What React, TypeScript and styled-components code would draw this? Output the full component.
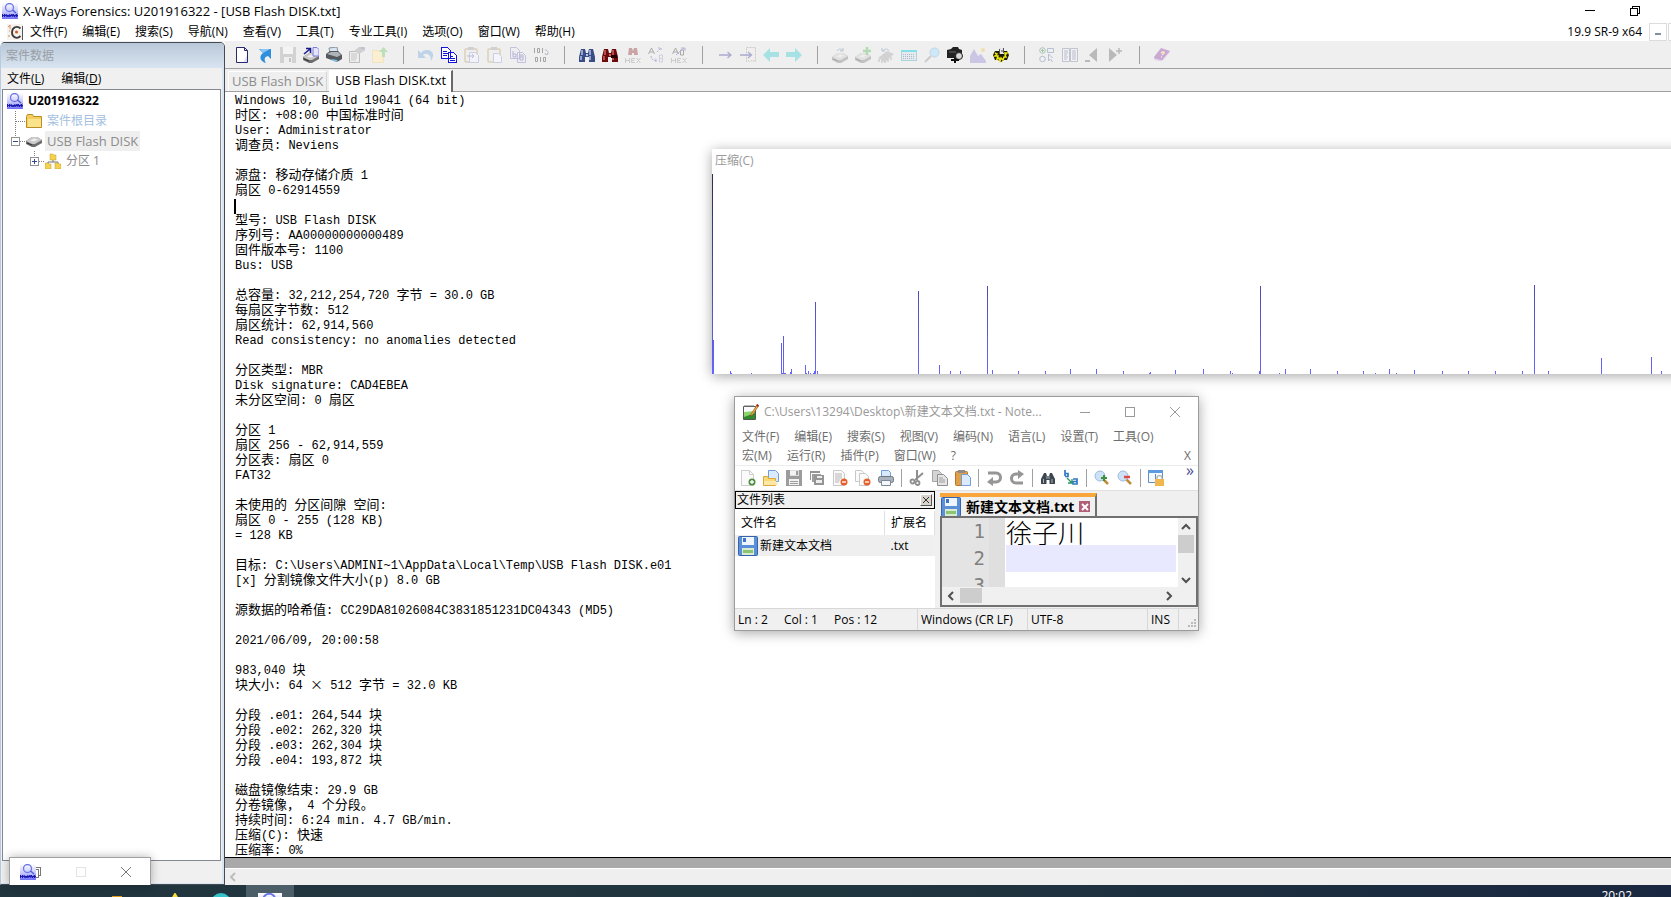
import React, { ReactNode } from "react";
import styled, { createGlobalStyle, css } from "styled-components";

const UI = `"Open Sans", "Noto Sans", "Noto Sans CJK SC", sans-serif`;
const MONO = `"Liberation Mono", "Noto Sans CJK SC", monospace`;

const GlobalStyle = createGlobalStyle`
  html, body, #root { height: 100%; }
  body { margin: 0; overflow: hidden; background: #fff; }
  *, *::before, *::after { box-sizing: border-box; }
  button { font: inherit; color: inherit; background: none; border: 0; padding: 0; margin: 0; }
  h1, h2, ul, p { margin: 0; padding: 0; font: inherit; list-style: none; }
  svg { display: block; flex: none; }
`;

/* ---------- icons ---------- */

const Svg = ({ w = 16, h = 16, crisp, children }: { w?: number; h?: number; crisp?: boolean; children: ReactNode }) => (
  <svg width={w} height={h} viewBox={`0 0 ${w} ${h}`} fill="none" shapeRendering={crisp ? "crispEdges" : undefined} aria-hidden="true">
    {children}
  </svg>
);

const Logo = ({ size = 16 }: { size?: number }) => (
  <svg width={size} height={size} viewBox="0 0 16 16" fill="none" aria-hidden="true">
    <defs>
      <linearGradient id="logoBg" x1="0" y1="0" x2="0" y2="1">
        <stop offset="0" stopColor="#fff" />
        <stop offset=".6" stopColor="#c3c3fb" />
        <stop offset="1" stopColor="#6f6ffa" />
      </linearGradient>
    </defs>
    <rect width="16" height="16" fill="url(#logoBg)" />
    <circle cx="7.5" cy="4.5" r="4" stroke="#6a78e8" strokeWidth="1.3" />
    <path d="M10.500 7l3.500 3" stroke="#5560d8" strokeWidth="1.6" />
    <path d="M0 11l3 3M3 11l-3 3M4 11l1 3 1-2 1 2 1-3M8.500 14l1.500-3 1 3M11 11l1.500 1.500V14M15.500 11l-2 1 2 1-2 1M0 12.500h16" stroke="#1a1ab0" strokeWidth="1" />
  </svg>
);

const AppDoc = () => (
  <Svg>
    <rect width="16" height="16" fill="#f6f2ee" />
    <path d="M13.500 4.500C10 1 5 3.500 5 8.500s5 7 8.500 3.500" stroke="#3a3a3a" strokeWidth="1.800" />
    <circle cx="9.500" cy="8" r="1.500" fill="#d8541c" />
    <path d="M1 3l2-2v4M2 7h1M1 12h2" stroke="#d88a5c" />
    <path d="M15.500 2v14" stroke="#555" />
  </Svg>
);

const drive = (dy = 0, dim = false) => (
  <g opacity={dim ? 0.35 : 1}>
    <path d={`M0 ${9 + dy}l6-4h5l5 3v3l-7 4h-3l-6-3z`} fill="#6d6d6d" />
    <path d={`M0 ${9 + dy}l6-4h5l5 3-7 4h-3z`} fill="#c9c9c9" />
    <path d={`M4 ${8.5 + dy}l4-2 4 1-4 2z`} fill="#efefef" />
    <path d={`M1 ${11 + dy}l5 2`} stroke="#333" />
  </g>
);

const binoculars = (dark: string, light: string) => (
  <>
    <path d="M2 2h4l1 4h2l1-4h4l2 8v5h-6v-5H6v5H0v-5z" fill={dark} />
    <path d="M3 3v5M11 3v5M2 9v4M11 9v4" stroke={light} strokeWidth="1.500" />
    <path d="M7 7h2v2H7z" fill={light} />
  </>
);

const hexWord = (
  <path d="M.5 11v5M.5 13.500h4M4.500 11v5M10 11.500H6.500v4H10M6.500 13.500H9M11.500 11l4 5M15.500 11l-4 5" stroke="#cbcbcb" />
);

const Icons: Record<string, ReactNode> = {
  newDoc: <Svg><path d="M2.500.5h8l3 3v12h-11z" fill="#fff" stroke="#28286e" /><path d="M10.500.5v3h3" stroke="#28286e" /><path d="M10 15h3V8z" fill="#dcdcf4" /></Svg>,
  shortcut: <Svg><path d="M2 2h12v10l-3-3c-4 1-4 4-2 7-5-1-8-6-3-10z" fill="#2f8fdc" /><path d="M3 2h10L6 6z" fill="#8cc6f4" /></Svg>,
  saveDim: <Svg crisp><path d="M0 0h16v16H0z" fill="#d2d2d2" /><path d="M3 0h10v7H3z" fill="#f4f4f4" /><path d="M4 10h8v6H4z" fill="#efefef" /><path d="M9 11h2v4H9z" fill="#c4c4c4" /></Svg>,
  driveRead: <Svg>{drive(1)}<path d="M10 .5h4l2 2V9h-6z" fill="#e3e3ff" stroke="#7a7ad8" /><path d="M1 7l6-5M3 1.500h4.500V6" stroke="#1b1b90" strokeWidth="1.600" /></Svg>,
  printer: <Svg><path d="M3 1l8-1 1 6H4z" fill="#d8e6f4" stroke="#88939c" /><path d="M0 7l4-3h8l4 4v4l-5 3-11-4z" fill="#55585c" /><path d="M1 7l4-2h7l3 3-4 2z" fill="#aeb4ba" /><path d="M5 12l6 1 1 2-5-1z" fill="#7cc7ef" /></Svg>,
  props: <Svg><path d="M.5 4.500h10v11H.5z" fill="#eee" stroke="#bbb" /><path d="M2 7h6M2 9h6M2 11h6M2 13h5" stroke="#c4c4c4" /><path d="M5 4l5-4h5v4l-5 3z" fill="#cfcfcf" /><path d="M12 1h4v3" stroke="#aeb2d4" /></Svg>,
  folderUp: <Svg><path d="M.5 3.500h11v12H.5z" fill="#faefd2" stroke="#f3e3bc" /><path d="M10 10V5H7l4.500-5L16 5h-3v5z" fill="#bce0bc" /></Svg>,
  undo: <Svg><path d="M0 3v8h8L5 8c3-3 8-1 8 6 5-8 0-11-4-11-3 0-5 1-6 3z" fill="#bfd3e8" /></Svg>,
  copy: <Svg crisp><path d="M.5.5h6l3 3v8h-9zM7.500 5.500h5l3 3v7h-8z" fill="#fff" stroke="#1414dc" /><path d="M2 4h4M2 6h5M2 8h4M9 9h3M9 11h5M9 13h5" stroke="#1414dc" /></Svg>,
  paste1: <Svg><rect x="1" y="2" width="12" height="13" rx="1" stroke="#ddd0ba" strokeWidth="1.500" /><path d="M4 0h6v3H4z" fill="#d0d0d0" /><path d="M5.500 5.500h6l3 3v7h-9z" fill="#f2f2fb" stroke="#cdcde0" /><path d="M3 9h7M8 7l2 2-2 2" stroke="#bcbcd4" /></Svg>,
  paste2: <Svg><rect x="1" y="2" width="12" height="13" rx="1" stroke="#ddd0ba" strokeWidth="1.500" /><path d="M4 0h6v3H4z" fill="#d0d0d0" /><path d="M6.500 6.500h5l3 3v6h-8z" fill="#f4f4fb" stroke="#cdcde0" /></Svg>,
  copyHex: <Svg><path d="M.5.5h6l3 3v8h-9zM7.500 5.500h5l3 3v7h-8z" fill="#eee" stroke="#c2c2e0" /><path d="M3 4v6M3 7h3v3H3M10 8v5h3v-5h-3M10 10h3" stroke="#b4b4d8" /></Svg>,
  binary: <Svg><path d="M1.500 1v5M4.500 1.500h2v4h-2zM9.500 1v5M2.500 10.500h2v4h-2zM7.500 10v5M10.500 10.500h2v4h-2z" stroke="#a4a4a4" /><path d="M12 3c3 0 4 3 2 5M15 6l-2 2-1-2" stroke="#bcbccc" /></Svg>,
  find: <Svg>{binoculars("#3a4c86", "#b4c4ec")}</Svg>,
  findHex: <Svg>{binoculars("#6c0b0b", "#d26666")}<path d="M9 8h6v3H9z" fill="#200" /></Svg>,
  findDim: <Svg><g opacity=".35"><path d="M4 1h3l1 3 1-3h3l1 7H9V6H7v2H3z" fill="#8a1c1c" /></g>{hexWord}</Svg>,
  replaceAB: <Svg><path d="M.5 7l3-6 3 6M1.500 5h4" stroke="#aaa" /><path d="M11.500 8v7h3v-7h-3M11.500 11.500h3" stroke="#cfcfe4" /><path d="M3 9c0 3 2 5 6 4.500M7 11.500l2 2-2 2M9 5l4-4M10 1h3v3" stroke="#b2b2d4" strokeDasharray="2 1" /></Svg>,
  replaceHex: <Svg><path d="M1.500 7l3-6 3 6M2.500 5h4M9.500 3v5h3V3h-3" stroke="#aaa" /><path d="M5 8l8-7M10 1h4v3" stroke="#b2b2d4" />{hexWord}</Svg>,
  arrow: <Svg><path d="M2 8h12M10.500 5L14 8l-3.500 3" stroke="#ababd0" strokeWidth="1.300" /></Svg>,
  arrowPage: <Svg><path d="M6.500.5h9v14l-1.500-1-1.500 1-1.500-1-1.500 1-1.500-1-1.500 1z" stroke="#d4c9c2" strokeDasharray="2 1" /><path d="M0 8h11M8 5l3.500 3L8 11" stroke="#ababd0" strokeWidth="1.300" /></Svg>,
  back: <Svg><path d="M0 8l7-7v4h9v5H7v5z" fill="#a6e2e4" /></Svg>,
  forward: <Svg><path d="M16 8L9 1v4H0v5h9v5z" fill="#a6e2e4" /></Svg>,
  disk1: <Svg>{drive(1, true)}<path d="M5 4c2-3 5-2 6 0M11 1v3H8" stroke="#b4c6d6" /></Svg>,
  disk2: <Svg>{drive(1, true)}<path d="M12 0v8M8 4h8" stroke="#b4dab4" strokeWidth="2.500" /></Svg>,
  ram: <Svg><path d="M0 11l9-7 7 3-9 8z" fill="#d2d2d2" /><path d="M1 12v3M4 13v3M7 14v2M10 12v3M13 10v3" stroke="#bebebe" /><path d="M5 4c2-3 5-2 6 0M4 1v3h3" stroke="#b4c6d6" /></Svg>,
  keyboard: <Svg crisp><path d="M0 3h16v11H0z" fill="#a8d6da" /><path d="M0 3h16v2H0z" fill="#84dfe6" /><path d="M1 5h14v8H1z" fill="#e4eaee" /><path d="M2 7h12M2 9h12M2 11h12" stroke="#b0b6c8" strokeDasharray="1 1" /></Svg>,
  lens: <Svg><path d="M1 15l6-6" stroke="#cbcbcb" strokeWidth="2" /><circle cx="10.500" cy="5.500" r="4.500" fill="#cfe8f8" stroke="#bdd6e8" /></Svg>,
  camera: <Svg><path d="M0 3l4-1 2-2h5l1 2 3 1v8H0z" fill="#222" /><path d="M2 5h7" stroke="#666" /><circle cx="12" cy="9" r="3.500" fill="#d6d6d6" stroke="#222" /><path d="M4 13h8M8 11v5" stroke="#111" strokeWidth="2" /></Svg>,
  picture: <Svg><path d="M0 16V9l4-7 4 7 3-2 5 7v2z" fill="#cac6e4" /><circle cx="13" cy="3" r="2" fill="#f3dcae" /></Svg>,
  gear: <Svg><path d="M2 4l12 0 2 4-2 5-3 0-3 2-3-2-3 0-2-5z" fill="#1c1c00" /><path d="M2 6l2 1-2 2 3 0-1 3 2-1 1 3 1-3 2 2 1-3 2 0-1-2 2-2-3 0" stroke="#f0e614" strokeWidth="1.500" /><path d="M6 1h5v6H6z" fill="#e6e6e6" /><path d="M6.500 2v5M10.500 1v5M8 4h2" stroke="#555" /></Svg>,
  selectors: <Svg><circle cx="3.500" cy="3.500" r="2.800" stroke="#a9c4b4" /><circle cx="3.500" cy="12" r="2.800" stroke="#b4c0d4" /><path d="M8.500 1.500h6v4h-6zM9.500 7v7l2-2 2 3M9.500 7l4 4" stroke="#b4c0d4" /><path d="M3.500 2v3M2 3.500h3" stroke="#9cc49c" /></Svg>,
  book: <Svg><path d="M.5 1.500h7v13h-7zM8.500 1.500h7v13h-7z" fill="#f2f2f2" stroke="#c0c4d0" /><path d="M2 4h4M2 6h4M2 8h3M2 10h4M2 12h3M10 4h4M10 6h4M10 8h4M10 10h4M10 12h4" stroke="#b8c0cc" /></Svg>,
  prevMinus: <Svg><path d="M12 1v14L4 8z" fill="#b9b9b9" /><path d="M0 14h5" stroke="#b9b9b9" strokeWidth="2" /></Svg>,
  nextPlus: <Svg><path d="M1 1v14l8-7z" fill="#b9b9b9" /><path d="M8 4h6M11 1v6" stroke="#b9b9b9" strokeWidth="1.500" /></Svg>,
  help: <Svg><path d="M0 10l7-9 9 3-8 10-7-1z" fill="#c9a8d4" /><path d="M1 12l7 2 8-9" stroke="#eadff0" /><path d="M7 6c2-2 4-1 3 0L8 8M7 10h1" stroke="#f5ecc0" strokeWidth="1.300" /></Svg>,
};

const noteSave = (c: string) => (
  <Svg crisp><path d="M0 0h16v16H0z" fill={c} /><path d="M4 0h9v6H4z" fill="#ddd" /><path d="M4 1h8v4H4z" fill="#f4f4f4" /><path d="M10 1h2v4h-2z" fill={c} /><path d="M3 9h10v6H3z" fill="#f2f2f2" /><path d="M4 11h8M4 13h8" stroke={c} /></Svg>
);

const badge = (c: string, plus?: boolean) => (
  <>
    <circle cx="12" cy="12" r="3.500" fill={c} />
    <path d={plus ? "M10 12h4M12 10v4" : "M10 12h4"} stroke="#fff" strokeWidth="1.300" />
  </>
);

const NoteIcons: Record<string, ReactNode> = {
  newFile: <Svg><path d="M1.500.5h8l4 4v11h-12z" fill="#fafafa" stroke="#cfcfcf" /><path d="M9.500.5v4h4" stroke="#cfcfcf" />{badge("#4c8f3f", true)}</Svg>,
  open: <Svg><path d="M5.500.5h7l3 3v8h-10z" fill="#dceaff" stroke="#6f9edb" /><path d="M.5 6.500h4l1 2h7v7H.5z" fill="#f8d978" stroke="#e0a63a" /><path d="M1 11h12l2 4H1z" fill="#fbe7a6" /></Svg>,
  save: noteSave("#9c9c9c"),
  saveAll: <Svg crisp><path d="M1 1h10v9H1z" fill="#959595" /><path d="M2.500 3.500h10v9h-10z" fill="#a0a0a0" stroke="#fff" /><path d="M5 5h10v10H5z" fill="#959595" /><path d="M8 6h5v2H8zM7 10h6v3H7z" fill="#eee" /></Svg>,
  close: <Svg><path d="M1.500.5h8l3 3v12h-11z" fill="#fafafa" stroke="#c9c9c9" /><path d="M3 4h7M3 6h7M3 8h7M3 10h5M3 12h4" stroke="#b5b5b5" />{badge("#e4602c")}</Svg>,
  closeAll: <Svg><path d="M.5.5h6l2 2v9h-8z" fill="#fafafa" stroke="#c9c9c9" /><path d="M4.500 3.500h6l3 3v9h-9z" fill="#fafafa" stroke="#c9c9c9" />{badge("#e4602c")}</Svg>,
  print: <Svg><path d="M3.500.5h7l2 2v6h-9z" fill="#d8e9fb" stroke="#6f9edb" /><rect x=".5" y="6.500" width="15" height="6" rx="2" fill="#aab3bd" stroke="#6c7680" /><path d="M3.500 10.500h9v5h-9z" fill="#f4f8fc" stroke="#7c8894" /></Svg>,
  cut: <Svg><path d="M8 0v10M14 3L6 10" stroke="#8f8f8f" strokeWidth="2" /><circle cx="3.500" cy="11.500" r="2" stroke="#8f8f8f" strokeWidth="1.800" /><circle cx="8.500" cy="13" r="2" stroke="#8f8f8f" strokeWidth="1.800" /></Svg>,
  copy: <Svg><path d="M.5.500h6l3 3v8h-9z" fill="#d4d4d4" stroke="#a5a5a5" /><path d="M5.500 4.500h6l4 4v7h-10z" fill="#e6e6e6" stroke="#8f8f8f" /><path d="M7 8h4M7 10h6M7 12h6" stroke="#9c9c9c" /></Svg>,
  paste: <Svg><rect x=".5" y="1.500" width="12" height="14" rx="1" fill="#e0a04a" stroke="#b8742a" /><path d="M3 0h7v3H3z" fill="#8c8c8c" /><path d="M6.500 4.500h6l3 3v8h-9z" fill="#dceaff" stroke="#6f9edb" /></Svg>,
  undo: <Svg><path d="M2 3h8c6 0 6 9 0 9H6" stroke="#969696" strokeWidth="3" /><path d="M7 7v9l-6-4z" fill="#969696" /></Svg>,
  redo: <Svg><path d="M10 4H7c-6 0-6 9 0 9h7" stroke="#969696" strokeWidth="3" /><path d="M9 0v9l6-5z" fill="#969696" /></Svg>,
  find: <Svg><path d="M4 3h2l1 3h2l1-3h2l3 6v5H9.500v-4h-3v4H1V9z" fill="#3c4650" /><path d="M3.500 9v4M12 9v4M7 6v3M9 6v3" stroke="#aab4be" /></Svg>,
  replace: <Svg><path d="M2 0v6M2 3.500h3v3H2M10 9h4v5h-4v-2.500h4" stroke="#2f79c4" strokeWidth="1.700" /><path d="M4 8l5 5M9 9v4H5" stroke="#2e9464" strokeWidth="1.300" /></Svg>,
  zoomIn: <Svg><path d="M9 9l5 5" stroke="#c28c3c" strokeWidth="2.500" /><circle cx="6" cy="6" r="5" fill="#cde2f8" stroke="#9cbcdc" /><path d="M7 8h6M10 5v6" stroke="#3c9440" strokeWidth="2" /></Svg>,
  zoomOut: <Svg><path d="M9 9l5 5" stroke="#c28c3c" strokeWidth="2.500" /><circle cx="6" cy="6" r="5" fill="#cde2f8" stroke="#9cbcdc" /><path d="M7 7h6" stroke="#e04848" strokeWidth="2.500" /></Svg>,
  sync: <Svg><path d="M.5.5h14v12H.5z" fill="#f4f9ff" stroke="#5f8fc8" /><path d="M0 0h15v3H0z" fill="#5f9ade" /><path d="M7.500 4v8" stroke="#5f8fc8" /><path d="M7 9h9v7H7z" fill="#f0b84c" /><path d="M9 9V7.500c0-2.500 5-2.500 5 0V9" stroke="#b0b0b0" strokeWidth="1.300" /></Svg>,
};

const Floppy = () => (
  <Svg w={20} h={20}>
    <rect x=".5" y=".5" width="19" height="19" rx="1" fill="#5b8fd8" stroke="#3564ac" />
    <path d="M4 1h12v8H4z" fill="#eef5fd" /><path d="M5 2h3v4H5z" fill="#3f74c4" />
    <path d="M4 12h12v7H4z" fill="#d9ecd0" /><path d="M5 14h10v3H5z" fill="#8cc474" />
  </Svg>
);

const NotepadLogo = () => (
  <Svg>
    <path d="M.5 2.500h12v13H.5z" fill="#fafafa" stroke="#555" />
    <path d="M2 1v2M4 1v2M6 1v2M8 1v2M10 1v2" stroke="#777" />
    <path d="M1 8l11-1v8H1z" fill="#8ed46c" /><path d="M1 13l11-4v6H1z" fill="#2f8a2c" />
    <path d="M8 10l6-9 1.500 1-6 9-2 1z" fill="#e8b23c" stroke="#8a4a1c" strokeWidth=".600" />
    <path d="M13 1l1.500-1L16 1.500 15 3z" fill="#a32020" />
  </Svg>
);

const Folder = () => (
  <Svg><path d="M.5 3.500l1-2h5l1 2h8v11H.5z" fill="#f2cf5c" stroke="#b98d24" /><path d="M2 6h13v8H2z" fill="#fbe38c" /></Svg>
);

const Partition = () => (
  <Svg>
    <path d="M8 6v3M3 11V9h10v2" stroke="#777" />
    <path d="M5 1h3l1 1h2v5H5zM0 10h3l1 1h2v5H0zM10 10h3l1 1h2v5h-6z" fill="#f4d24e" stroke="#c29a2a" strokeWidth=".500" />
  </Svg>
);

const CloseX = ({ color = "#777" }: { color?: string }) => (
  <Svg w={12} h={12}><path d="M1 1l10 10M11 1L1 11" stroke={color} /></Svg>
);
const Chevron = ({ d, color = "#505050" }: { d: string; color?: string }) => (
  <Svg w={10} h={10}><path d={d} stroke={color} strokeWidth="2" /></Svg>
);
const LEFT = "M7 1L3 5l4 4";
const RIGHT = "M3 1l4 4-4 4";
const UP = "M1 7l4-4 4 4";
const DOWN = "M1 3l4 4 4-4";

/* ---------- main window ---------- */

const Desktop = styled.div`
  height: 100vh;
  display: flex;
  flex-direction: column;
  overflow: hidden;
  position: relative;
  font-family: ${UI};
  font-size: 12px;
  line-height: 20px;
  color: #000;
`;
const TitleBar = styled.header`
  height: 22px;
  flex: none;
  display: flex;
  align-items: center;
  gap: 5px;
  padding: 0 16px 0 2px;
`;
const Title = styled.h1`
  && { font-size: 13px; }
  flex: 1;
  white-space: nowrap;
`;
const CaptionButton = styled.button<{ $w?: number }>`
  width: ${(p) => p.$w ?? 40}px;
  height: 20px;
  display: flex;
  align-items: center;
  justify-content: center;
`;
const MenuBar = styled.nav<{ $gap?: number; $pad?: number; $dim?: boolean; $h?: number }>`
  height: ${(p) => p.$h ?? 19}px;
  flex: none;
  display: flex;
  align-items: center;
  gap: ${(p) => p.$gap ?? 14}px;
  padding: 0 0 0 ${(p) => p.$pad ?? 7}px;
  color: ${(p) => (p.$dim ? "#6d6d6d" : "#000")};
  white-space: nowrap;
`;
const MenuGroup = styled.div`
  display: flex;
  gap: 15px;
`;
const Version = styled.span`
  margin-left: auto;
`;
const MdiButtons = styled.div`
  display: flex;
  gap: 1px;
  width: 22px;
  overflow: hidden;
`;
const MdiButton = styled.button`
  width: 18px;
  height: 18px;
  flex: none;
  border: 1px solid #dcdcdc;
  display: flex;
  align-items: center;
  justify-content: center;
`;
const Workspace = styled.div`
  flex: 1;
  min-height: 0;
  display: flex;
  border-top: 1px solid #efefef;
`;

/* case data panel */
const CasePanel = styled.aside`
  width: 225px;
  flex: none;
  display: flex;
  flex-direction: column;
  background: #f0f0f0;
  border: 1px solid #454b55;
  border-left-color: #b9cbe0;
  border-radius: 5px 5px 0 0;
  overflow: hidden;
`;
const CaseHead = styled.h2`
  && { padding: 3px 5px; }
  height: 25px;
  flex: none;
  color: #9a9fa6;
  background: linear-gradient(#b9c8d8, #d9e4f1);
`;
const CaseBody = styled.div`
  flex: 1;
  min-height: 0;
  display: flex;
  flex-direction: column;
  padding: 0 1px 22px 1px;
  border-right: 2px solid #d9e4f1;
  border-bottom: 1px solid #d9e4f1;
`;
const Tree = styled.ul`
  && { flex: 1; padding: 1px 0 0 0; }
  background: #fff;
  border: 1px solid #828790;
`;
const TreeRow = styled.li<{ $pad: number; $color?: string; $bold?: boolean }>`
  height: 20px;
  display: flex;
  align-items: center;
  padding-left: ${(p) => p.$pad}px;
  color: ${(p) => p.$color ?? "#000"};
  font-weight: ${(p) => (p.$bold ? 700 : 400)};
`;
const TreeLabel = styled.span<{ $selected?: boolean }>`
  margin-left: 3px;
  padding: 0 2px;
  ${(p) => p.$selected && css`background: #efefef; font-size: 13px;`}
`;

const Branch = ({ box, last }: { box?: "+" | "-"; last?: boolean }) => (
  <Svg w={15} h={20} crisp>
    <path d={`M4.500 0v${last ? 10 : 20}M5 10.500h10`} stroke="#808080" strokeDasharray="1 1" />
    {box && (
      <>
        <rect x=".5" y="6.500" width="8" height="8" fill="#fff" stroke="#919191" />
        <path d={box === "+" ? "M2 10.500h5M4.500 8v5" : "M2 10.500h5"} stroke="#334b8c" />
      </>
    )}
  </Svg>
);

/* toolbar and tabs */
const Main = styled.main`
  flex: 1;
  min-width: 0;
  display: flex;
  flex-direction: column;
`;
const Toolbar = styled.div`
  height: 27px;
  flex: none;
  display: flex;
  align-items: center;
  gap: 7px;
  padding: 0 9px 1px;
  background: #efefef;
  border-bottom: 1px solid #a0a0a0;
`;
const ToolButton = styled.button`
  width: 16px;
  height: 16px;
  flex: none;
`;
const ToolSep = styled.span`
  width: 16px;
  height: 18px;
  flex: none;
  background: linear-gradient(#a0a0a0, #a0a0a0) center / 1px 18px no-repeat;
`;
const TabStrip = styled.div`
  height: 23px;
  flex: none;
  display: flex;
  align-items: flex-end;
  gap: 2px;
  padding-left: 3px;
  background: #efefef;
  border-bottom: 1px solid #a0a0a0;
`;
const Tab = styled.button<{ $active?: boolean }>`
  height: ${(p) => (p.$active ? 22 : 20)}px;
  margin-bottom: ${(p) => (p.$active ? -1 : 0)}px;
  padding: ${(p) => (p.$active ? "0 5px 4px" : "0 3px 1px")};
  font-size: 13px;
  line-height: 18px;
  white-space: nowrap;
  border: 1px solid #fff;
  border-right: ${(p) => (p.$active ? "2px solid #696969" : "1px solid #d4d4d4")};
  border-bottom: 0;
  color: ${(p) => (p.$active ? "#000" : "#8c8c8c")};
  background: ${(p) => (p.$active ? "#fff" : "#efefef")};
`;
const Report = styled.article`
  flex: 1;
  min-height: 0;
  overflow: hidden;
  padding: 2px 0 0 10px;
  background: #fff;
  border-bottom: 1px solid #000;
  font-family: ${MONO};
  font-size: 12px;
  line-height: 15px;
`;
const ReportLine = styled.p`
  height: 15px;
  white-space: pre;
`;
const Han = styled.span`
  font-family: "Noto Sans CJK SC", sans-serif;
  font-size: 13px;
  line-height: 0;
`;
const Caret = styled.span`
  display: block;
  width: 2px;
  height: 15px;
  margin-left: -1px;
  background: #000;
`;
const GrayBand = styled.div`
  height: 11px;
  flex: none;
  background: #a9a9a9;
  border-bottom: 1px solid #fff;
`;
const BottomScroll = styled.div`
  height: 16px;
  flex: none;
  display: flex;
  align-items: center;
  padding-left: 3px;
  background: #efefef;
`;

/* compression chart window */
const ChartWindow = styled.section`
  position: absolute;
  left: 712px;
  right: -20px;
  top: 149px;
  height: 225px;
  background: #fff;
  box-shadow: 0 2px 12px rgba(0, 0, 0, 0.35);
`;
const ChartTitle = styled.h2`
  && { padding: 2px 3px; }
  height: 25px;
  color: #999;
`;

const BARS: [number, number][] = [
  [0, 200], [1, 34], [18, 3], [19, 1], [39, 1], [69, 31], [70, 1], [71, 38], [72, 1], [73, 1], [78, 2], [79, 5],
  [93, 9], [94, 1], [96, 3], [98, 1], [101, 1], [102, 3], [103, 72], [105, 3], [206, 83], [227, 9], [238, 3],
  [248, 3], [275, 88], [280, 4], [306, 3], [333, 3], [358, 5], [384, 5], [411, 3], [437, 1], [438, 2], [463, 4],
  [491, 5], [518, 3], [520, 1], [547, 3], [548, 88], [567, 1], [573, 5], [598, 5], [625, 3], [651, 3], [663, 1],
  [677, 5], [684, 1], [702, 4], [730, 3], [756, 3], [783, 3], [810, 3], [822, 89], [836, 3], [889, 16], [939, 17],
  [949, 3],
];

/* editor window */
const NoteWindow = styled.section`
  position: absolute;
  left: 734px;
  top: 396px;
  width: 465px;
  height: 235px;
  display: flex;
  flex-direction: column;
  background: #fff;
  border: 1px solid #9c9c9c;
  box-shadow: 0 2px 12px rgba(0, 0, 0, 0.35);
`;
const NoteTitle = styled.header`
  height: 30px;
  flex: none;
  display: flex;
  align-items: center;
  gap: 5px;
  padding: 0 3px 0 8px;
  color: #999;
`;
const NoteName = styled.h2`
  flex: 1;
  white-space: nowrap;
`;
const MenuClose = styled.button`
  margin-left: auto;
  margin-right: 7px;
`;
const NoteTools = styled.div`
  height: 26px;
  flex: none;
  display: flex;
  align-items: center;
  gap: 7px;
  padding: 0 4px 0 5px;
  border-top: 1px solid #ececec;
  border-bottom: 1px solid #e0e0e0;
`;
const NoteSep = styled.span`
  width: 1px;
  height: 18px;
  background: #a0a0a0;
`;
const More = styled.button`
  margin-left: auto;
  align-self: flex-start;
  height: 9px;
  line-height: 9px;
  font-size: 16px;
  color: #4a4a90;
`;
const NoteBody = styled.div`
  flex: 1;
  min-height: 0;
  display: flex;
  gap: 5px;
  background: #f0f0f0;
`;
const FileList = styled.div`
  width: 200px;
  display: flex;
  flex-direction: column;
  background: #fff;
`;
const FileListHead = styled.div`
  height: 18px;
  flex: none;
  display: flex;
  align-items: center;
  justify-content: space-between;
  padding: 0 2px 0 1px;
  line-height: 16px;
  background: #f0f0f0;
  border: 1px solid #000;
`;
const TinyClose = styled.button`
  width: 12px;
  height: 12px;
  display: flex;
  align-items: center;
  justify-content: center;
  background: #d8d4cc;
  border: 1px solid;
  border-color: #fff #555 #555 #fff;
`;
const FileTable = styled.table`
  width: 100%;
  margin-top: 2px;
  border-collapse: collapse;
  th, td { padding: 0 0 0 6px; text-align: left; font-weight: 400; }
  th { height: 24px; border-right: 1px solid #e0e0e0; }
  td { height: 21px; background: #efefef; }
  td:first-child { padding-left: 3px; }
`;
const FileCell = styled.span`
  display: flex;
  align-items: center;
  gap: 2px;
  white-space: nowrap;
`;
const EditorPane = styled.div`
  flex: 1;
  min-width: 0;
  display: flex;
  flex-direction: column;
`;
const EditorTab = styled.button`
  height: 23px;
  margin-top: 2px;
  align-self: flex-start;
  display: flex;
  align-items: center;
  gap: 5px;
  padding: 0 5px 0 1px;
  font-size: 14px;
  line-height: 18px;
  font-weight: 700;
  border-top: 4px solid #f9a63c;
  border-right: 2px solid #707070;
`;
const TabClose = styled.span`
  width: 11px;
  height: 11px;
  display: flex;
  align-items: center;
  justify-content: center;
  background: #b06078;
`;
const EditorFrame = styled.div`
  flex: 1;
  min-height: 0;
  margin-bottom: 1px;
  display: grid;
  grid-template-columns: 1fr 18px;
  grid-template-rows: 1fr 17px;
  padding: 0 0 1px;
  border: 2px solid #707070;
  background: #f0f0f0;
`;
const Lines = styled.div`
  min-height: 0;
  overflow: hidden;
  background: linear-gradient(90deg, #e4e4e4 47px, #dfdfdf 47px, #dfdfdf 63px, #fff 63px);
`;
const CodeLine = styled.div`
  height: 27px;
  display: flex;
  line-height: 27px;
`;
const LineNo = styled.span`
  width: 43px;
  flex: none;
  text-align: right;
  font-family: "DejaVu Sans Mono", monospace;
  font-size: 19px;
  color: #808080;
`;
const Code = styled.span<{ $current?: boolean }>`
  flex: 1;
  margin: 0 2px 0 21px;
  font-family: "Noto Sans CJK SC", sans-serif;
  font-size: 26px;
  font-weight: 300;
  background: ${(p) => (p.$current ? "#e8e8ff" : "transparent")};
`;
const ScrollBar = styled.div<{ $vertical?: boolean }>`
  display: flex;
  flex-direction: ${(p) => (p.$vertical ? "column" : "row")};
  align-items: center;
  padding: ${(p) => (p.$vertical ? "4px 2px 2px 0" : "0 4px")};
`;
const Thumb = styled.span<{ $vertical?: boolean }>`
  width: ${(p) => (p.$vertical ? 16 : 22)}px;
  height: ${(p) => (p.$vertical ? 18 : 15)}px;
  margin: ${(p) => (p.$vertical ? "3px 0 auto" : "0 auto 0 4px")};
  background: #cdcdcd;
`;
const StatusBar = styled.footer`
  height: 22px;
  flex: none;
  display: flex;
  line-height: 22px;
  background: #f0f0f0;
  border-top: 1px solid #d7d7d7;
`;
const StatusCell = styled.span<{ $w?: number }>`
  ${(p) => (p.$w ? `width: ${p.$w}px;` : "flex: 1;")}
  display: flex;
  gap: 16px;
  padding-left: 3px;
  white-space: nowrap;
  border-right: 1px solid #d7d7d7;
`;
const Grip = styled.span`
  width: 19px;
  display: flex;
  align-items: flex-end;
  justify-content: flex-end;
  padding: 0 1px 2px 0;
`;

/* minimised child window and taskbar */
const MiniWindow = styled.section`
  position: absolute;
  left: 9px;
  bottom: 12px;
  width: 142px;
  height: 28px;
  display: flex;
  align-items: center;
  padding-left: 10px;
  background: #fff;
  border: 1px solid #a0a0a0;
  border-bottom: 0;
  box-shadow: 0 0 10px rgba(0, 0, 0, 0.3);
`;
const MiniMark = styled.span`
  display: flex;
  width: 40px;
`;
const Taskbar = styled.footer`
  height: 12px;
  flex: none;
  display: flex;
  overflow: hidden;
  padding: 0 39px 0 94px;
  background: linear-gradient(90deg, #21353f, #20363f 50%, #1a2740);
  color: #fff;
`;
const TaskItem = styled.button<{ $w: number; $active?: boolean }>`
  width: ${(p) => p.$w}px;
  height: 40px;
  flex: none;
  display: flex;
  justify-content: center;
  margin-left: ${(p) => (p.$active ? 13 : 0)}px;
  padding-top: 8px;
  background: ${(p) => (p.$active ? "#4c5f68" : "transparent")};
`;
const Clock = styled.time`
  margin-left: auto;
  line-height: 22px;
`;

/* ---------- content ---------- */

const MENU = ["文件(F)", "编辑(E)", "搜索(S)", "导航(N)", "查看(V)", "工具(T)", "专业工具(I)", "选项(O)", "窗口(W)", "帮助(H)"];

const TOOL_GROUPS = [
  ["newDoc", "shortcut", "saveDim", "driveRead", "printer", "props", "folderUp"],
  ["undo", "copy", "paste1", "paste2", "copyHex", "binary"],
  ["find", "findHex", "findDim", "replaceAB", "replaceHex"],
  ["arrow", "arrowPage", "back", "forward"],
  ["disk1", "disk2", "ram", "keyboard", "lens", "camera", "picture", "gear"],
  ["selectors", "book", "prevMinus", "nextPlus"],
  ["help"],
];

const NOTE_MENU = [
  ["文件(F)", "编辑(E)", "搜索(S)", "视图(V)", "编码(N)", "语言(L)", "设置(T)", "工具(O)"],
  ["宏(M)", "运行(R)", "插件(P)", "窗口(W)", "?"],
];

const NOTE_GROUPS = [
  ["newFile", "open", "save", "saveAll", "close", "closeAll", "print"],
  ["cut", "copy", "paste"],
  ["undo", "redo"],
  ["find", "replace"],
  ["zoomIn", "zoomOut"],
  ["sync"],
];

/* null marks the empty line that holds the text cursor */
const REPORT: (string | null)[] = [
  "Windows 10, Build 19041 (64 bit)",
  "时区: +08:00 中国标准时间",
  "User: Administrator",
  "调查员: Neviens",
  "",
  "源盘: 移动存储介质 1",
  "扇区 0-62914559",
  null,
  "型号: USB Flash DISK",
  "序列号: AA00000000000489",
  "固件版本号: 1100",
  "Bus: USB",
  "",
  "总容量: 32,212,254,720 字节 = 30.0 GB",
  "每扇区字节数: 512",
  "扇区统计: 62,914,560",
  "Read consistency: no anomalies detected",
  "",
  "分区类型: MBR",
  "Disk signature: CAD4EBEA",
  "未分区空间: 0 扇区",
  "",
  "分区 1",
  "扇区 256 - 62,914,559",
  "分区表: 扇区 0",
  "FAT32",
  "",
  "未使用的 分区间隙 空间:",
  "扇区 0 - 255 (128 KB)",
  "= 128 KB",
  "",
  "目标: C:\\Users\\ADMINI~1\\AppData\\Local\\Temp\\USB Flash DISK.e01",
  "[x] 分割镜像文件大小(p) 8.0 GB",
  "",
  "源数据的哈希值: CC29DA81026084C3831851231DC04343 (MD5)",
  "",
  "2021/06/09, 20:00:58",
  "",
  "983,040 块",
  "块大小: 64 × 512 字节 = 32.0 KB",
  "",
  "分段 .e01: 264,544 块",
  "分段 .e02: 262,320 块",
  "分段 .e03: 262,304 块",
  "分段 .e04: 193,872 块",
  "",
  "磁盘镜像结束: 29.9 GB",
  "分卷镜像， 4 个分段。",
  "持续时间: 6:24 min. 4.7 GB/min.",
  "压缩(C): 快速",
  "压缩率: 0%",
];

const splitRuns = (line: string) =>
  line.split(/([^\x00-\x7f]+)/).map((run, i) => (i % 2 ? <Han key={i}>{run}</Han> : run));

const Tools = ({ groups, icons, Sep }: { groups: string[][]; icons: Record<string, ReactNode>; Sep: React.ElementType }) => (
  <>
    {groups.map((group, g) => (
      <React.Fragment key={g}>
        {g > 0 && <Sep />}
        {group.map((name) => (
          <ToolButton key={name} aria-label={name}>{icons[name]}</ToolButton>
        ))}
      </React.Fragment>
    ))}
  </>
);

const CaseData = () => (
  <CasePanel>
    <CaseHead>案件数据</CaseHead>
    <CaseBody>
      <MenuBar $pad={5} $gap={17} $h={21}>
        <button>文件(<u>L</u>)</button>
        <button>编辑(<u>D</u>)</button>
      </MenuBar>
      <Tree>
        <TreeRow $pad={4} $bold><Logo /><TreeLabel>U201916322</TreeLabel></TreeRow>
        <TreeRow $pad={8} $color="#a3c0e0"><Branch /><Folder /><TreeLabel>案件根目录</TreeLabel></TreeRow>
        <TreeRow $pad={8} $color="#8c8c8c"><Branch box="-" last /><Svg>{drive(-1)}</Svg><TreeLabel $selected>USB Flash DISK</TreeLabel></TreeRow>
        <TreeRow $pad={27} $color="#8c8c8c"><Branch box="+" last /><Partition /><TreeLabel>分区 1</TreeLabel></TreeRow>
      </Tree>
    </CaseBody>
  </CasePanel>
);

const Chart = () => (
  <ChartWindow>
    <ChartTitle>压缩(C)</ChartTitle>
    <svg width="960" height="200" shapeRendering="crispEdges" role="img" aria-label="压缩(C)">
      <defs>
        <linearGradient id="bar" gradientUnits="userSpaceOnUse" x1="0" y1="0" x2="0" y2="200">
          <stop offset="0" stopColor="#2c2c50" />
          <stop offset="1" stopColor="#6666ff" />
        </linearGradient>
      </defs>
      {BARS.map(([x, h]) => (
        <rect key={x} x={x} y={200 - h} width="1" height={h} fill="url(#bar)" />
      ))}
    </svg>
  </ChartWindow>
);

const Notepad = () => (
  <NoteWindow>
    <NoteTitle>
      <NotepadLogo />
      <NoteName>C:\Users\13294\Desktop\新建文本文档.txt - Note...</NoteName>
      <CaptionButton aria-label="最小化"><Svg w={12} h={12} crisp><path d="M1 6.500h10" stroke="#999" /></Svg></CaptionButton>
      <CaptionButton aria-label="最大化"><Svg w={12} h={12} crisp><path d="M1.500 1.500h9v9h-9z" stroke="#999" /></Svg></CaptionButton>
      <CaptionButton aria-label="关闭"><CloseX color="#999" /></CaptionButton>
    </NoteTitle>
    {NOTE_MENU.map((row, i) => (
      <MenuBar key={i} $dim>
        <MenuGroup>{row.map((m) => <button key={m}>{m}</button>)}</MenuGroup>
        {i === 1 && <MenuClose>X</MenuClose>}
      </MenuBar>
    ))}
    <NoteTools>
      <Tools groups={NOTE_GROUPS} icons={NoteIcons} Sep={NoteSep} />
      <More aria-label="更多">»</More>
    </NoteTools>
    <NoteBody>
      <FileList>
        <FileListHead>
          文件列表
          <TinyClose aria-label="关闭列表"><Svg w={8} h={8}><path d="M1 1l6 6M7 1L1 7" stroke="#333" /></Svg></TinyClose>
        </FileListHead>
        <FileTable>
          <colgroup><col /><col width="50" /></colgroup>
          <thead><tr><th>文件名</th><th>扩展名</th></tr></thead>
          <tbody><tr><td><FileCell><Floppy />新建文本文档</FileCell></td><td>.txt</td></tr></tbody>
        </FileTable>
      </FileList>
      <EditorPane>
        <EditorTab>
          <Floppy />
          新建文本文档.txt
          <TabClose><Svg w={8} h={8}><path d="M1 1l6 6M7 1L1 7" stroke="#fff" strokeWidth="2" /></Svg></TabClose>
        </EditorTab>
        <EditorFrame>
          <Lines>
            <CodeLine><LineNo>1</LineNo><Code>徐子川</Code></CodeLine>
            <CodeLine><LineNo>2</LineNo><Code $current /></CodeLine>
            <CodeLine><LineNo>3</LineNo><Code /></CodeLine>
          </Lines>
          <ScrollBar $vertical>
            <button aria-label="向上"><Chevron d={UP} /></button>
            <Thumb $vertical />
            <button aria-label="向下"><Chevron d={DOWN} /></button>
          </ScrollBar>
          <ScrollBar>
            <button aria-label="向左"><Chevron d={LEFT} /></button>
            <Thumb />
            <button aria-label="向右"><Chevron d={RIGHT} /></button>
          </ScrollBar>
        </EditorFrame>
      </EditorPane>
    </NoteBody>
    <StatusBar>
      <StatusCell $w={183}><span>Ln : 2</span><span>Col : 1</span><span>Pos : 12</span></StatusCell>
      <StatusCell $w={110}>Windows (CR LF)</StatusCell>
      <StatusCell>UTF-8</StatusCell>
      <StatusCell $w={31}>INS</StatusCell>
      <Grip><Svg w={9} h={9} crisp><path d="M6 0h2v2H6zM3 3h2v2H3zM6 3h2v2H6zM0 6h2v2H0zM3 6h2v2H3zM6 6h2v2H6z" fill="#bbb" /></Svg></Grip>
    </StatusBar>
  </NoteWindow>
);

export default function App() {
  return (
    <Desktop>
      <GlobalStyle />
      <TitleBar>
        <Logo />
        <Title>X-Ways Forensics: U201916322 - [USB Flash DISK.txt]</Title>
        <CaptionButton aria-label="最小化"><Svg w={12} h={12} crisp><path d="M1 5.500h10" stroke="#000" /></Svg></CaptionButton>
        <CaptionButton aria-label="还原"><Svg w={12} h={12} crisp><path d="M1.500 3.500h7v7h-7zM3.500 3V1.500h7v7H9" stroke="#000" /></Svg></CaptionButton>
      </TitleBar>
      <MenuBar $gap={7}>
        <AppDoc />
        <MenuGroup>{MENU.map((m) => <button key={m}>{m}</button>)}</MenuGroup>
        <Version>19.9 SR-9 x64</Version>
        <MdiButtons>
          <MdiButton aria-label="最小化窗口"><Svg w={8} h={8} crisp><path d="M1 5h6v2H1z" fill="#8290a0" /></Svg></MdiButton>
          <MdiButton aria-label="还原窗口" />
        </MdiButtons>
      </MenuBar>
      <Workspace>
        <CaseData />
        <Main>
          <Toolbar><Tools groups={TOOL_GROUPS} icons={Icons} Sep={ToolSep} /></Toolbar>
          <TabStrip role="tablist">
            <Tab role="tab">USB Flash DISK</Tab>
            <Tab role="tab" $active aria-selected="true">USB Flash DISK.txt</Tab>
          </TabStrip>
          <Report>
            {REPORT.map((line, i) => (
              <ReportLine key={i}>{line === null ? <Caret /> : splitRuns(line)}</ReportLine>
            ))}
          </Report>
          <GrayBand />
          <BottomScroll><button aria-label="向左"><Chevron d={LEFT} color="#bdbdbd" /></button></BottomScroll>
        </Main>
      </Workspace>
      <Chart />
      <Notepad />
      <MiniWindow>
        <MiniMark><Logo /><Svg w={6} h={16} crisp><path d="M0 5.500h2.500v8H0M0 3.500h4.500v8H3" stroke="#777" /></Svg></MiniMark>
        <CaptionButton $w={43} aria-label="最大化"><Svg w={12} h={12} crisp><path d="M1.500 1.500h9v9h-9z" stroke="#e4e4e4" /></Svg></CaptionButton>
        <CaptionButton $w={48} aria-label="关闭"><CloseX /></CaptionButton>
      </MiniWindow>
      <Taskbar>
        <TaskItem $w={46} aria-label="文件夹"><Svg w={10} h={4}><path d="M0 3h10v1H0z" fill="#e09b1c" /></Svg></TaskItem>
        <TaskItem $w={69} aria-label="收藏"><Svg w={16} h={6}><path d="M8-1l4 7H4z" fill="#f5dc3c" /></Svg></TaskItem>
        <TaskItem $w={24} aria-label="浏览器"><Svg w={20} h={20}><circle cx="10" cy="10" r="10" fill="#35c2c8" /></Svg></TaskItem>
        <TaskItem $w={48} $active aria-label="X-Ways"><Logo size={24} /></TaskItem>
        <Clock>20:02</Clock>
      </Taskbar>
    </Desktop>
  );
}
